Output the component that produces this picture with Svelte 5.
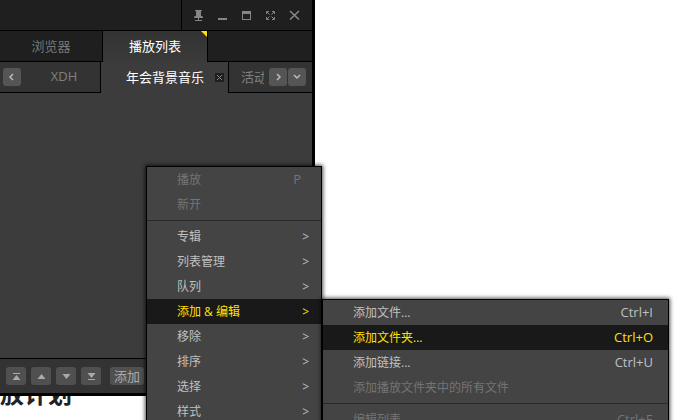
<script lang="ts">
	type Item = {
		label: string;
		key?: string;
		disabled?: boolean;
		sub?: boolean;
		active?: boolean;
		sep?: boolean;
	};

	const mainMenu: Item[] = [
		{ label: '播放', key: 'P', disabled: true },
		{ label: '新开', disabled: true },
		{ label: '专辑', sub: true, sep: true },
		{ label: '列表管理', sub: true },
		{ label: '队列', sub: true },
		{ label: '添加 & 编辑', sub: true, active: true },
		{ label: '移除', sub: true },
		{ label: '排序', sub: true },
		{ label: '选择', sub: true },
		{ label: '样式', sub: true }
	];

	const subMenu: Item[] = [
		{ label: '添加文件...', key: 'Ctrl+I' },
		{ label: '添加文件夹...', key: 'Ctrl+O', active: true },
		{ label: '添加链接...', key: 'Ctrl+U' },
		{ label: '添加播放文件夹中的所有文件', disabled: true },
		{ label: '编辑列表', key: 'Ctrl+E', disabled: true, sep: true }
	];

	const moves = [
		{ name: '移到顶部', d: 'M7 6h7v1H7zM10.500 8l4 5h-8z' },
		{ name: '上移', d: 'M10.500 7l4 5h-8z' },
		{ name: '下移', d: 'M6.500 7h8l-4 5z' },
		{ name: '移到底部', d: 'M6.500 6h8l-4 5zM7 12h7v1H7z' }
	];
</script>

{#snippet menuItems(items: Item[])}
	{#each items as item (item.label)}
		{#if item.sep}
			<div class="separator" role="separator"></div>
		{/if}
		<button
			class="menu-item"
			class:active={item.active}
			role="menuitem"
			disabled={item.disabled}
			aria-haspopup={item.sub ? 'menu' : undefined}
		>
			<span class="label">{item.label}</span>
			{#if item.key}<span class="key">{item.key}</span>{/if}
			{#if item.sub}<span class="arrow">&gt;</span>{/if}
		</button>
	{/each}
{/snippet}

<main class="desktop">
	<h1 class="page-title">放计划</h1>

	<section class="player">
		<header class="titlebar">
			<div class="controls">
				<button aria-label="置顶">
					<svg width="24" height="30">
						<path d="M8 10h7v1h-1v5h1q1 0 1 2H7q0-2 1-2h1v-5H8zM11 18h1v2h3v1H8v-1h3z" fill="#858585" />
					</svg>
				</button>
				<button aria-label="最小化">
					<svg width="24" height="30"><path d="M7 18h9v2H7z" fill="#858585" /></svg>
				</button>
				<button aria-label="最大化">
					<svg width="24" height="30">
						<path d="M7 11h9v9H7zM8 14v5h7v-5z" fill="#858585" fill-rule="evenodd" />
					</svg>
				</button>
				<button aria-label="全屏">
					<svg width="24" height="30" fill="none" stroke="#858585">
						<path d="M7.500 14v-2.500H10M13 11.500h2.500V14M15.500 17v2.500H13M10 19.500H7.500V17M8 12l2.500 2.500M15 12l-2.500 2.500M15 19l-2.500-2.500M8 19l2.500-2.500" />
					</svg>
				</button>
				<button aria-label="关闭">
					<svg width="24" height="30" fill="none" stroke="#8a8a8a" stroke-width="1.500">
						<path d="M7 11l9 8.500M16 11l-9 8.500" />
					</svg>
				</button>
			</div>
		</header>

		<nav class="tabs">
			<button class="tab">浏览器</button>
			<button class="tab current">播放列表</button>
			<div class="rest"></div>
		</nav>

		<nav class="lists">
			<div class="list first">
				<button class="square" aria-label="向左">
					<svg width="18" height="18"><path d="M10 6L7 9l3 3" /></svg>
				</button>
				<button class="name">XDH</button>
			</div>
			<div class="list current">
				<button class="name">年会背景音乐</button>
				<button class="close" aria-label="关闭列表">
					<svg width="9" height="9"><path d="M2 2l5 5M7 2L2 7" /></svg>
				</button>
			</div>
			<div class="list last">
				<button class="name">活动</button>
				<button class="square" aria-label="向右">
					<svg width="18" height="18"><path d="M8 6l3 3-3 3" /></svg>
				</button>
				<button class="square" aria-label="全部列表">
					<svg width="18" height="18"><path d="M6 7l3 3 3-3" /></svg>
				</button>
			</div>
		</nav>

		<div class="tracks"></div>

		<footer class="toolbar">
			{#each moves as move (move.name)}
				<button class="move" aria-label={move.name}>
					<svg width="20" height="18"><path d={move.d} /></svg>
				</button>
			{/each}
			<button class="add">添加</button>
		</footer>
	</section>

	<div class="menu main-menu" role="menu">
		{@render menuItems(mainMenu)}
	</div>
	<div class="menu sub-menu" role="menu">
		{@render menuItems(subMenu)}
	</div>
</main>

<style>
	:global(body) {
		margin: 0;
		background: #fff;
	}

	.desktop {
		position: relative;
		display: flex;
		flex-direction: column;
		justify-content: flex-end;
		height: 100vh;
		overflow: hidden;
		font-family: 'Open Sans', 'Noto Sans CJK SC', sans-serif;
		font-size: 13px;
	}

	button {
		margin: 0;
		padding: 0;
		border: 0;
		background: none;
		color: inherit;
		font: inherit;
		white-space: nowrap;
	}

	svg {
		display: block;
	}

	.page-title {
		margin: 0;
		padding-bottom: 12px;
		font-size: 24px;
		line-height: 28px;
		color: #222;
	}

	.player {
		position: absolute;
		top: 0;
		left: 0;
		bottom: 24px;
		box-sizing: border-box;
		width: 315px;
		display: flex;
		flex-direction: column;
		border: solid #000;
		border-width: 0 3px 3px 0;
		background: #3c3c3c;
	}

	.titlebar {
		display: flex;
		justify-content: flex-end;
		height: 30px;
		border-bottom: 1px solid #000;
		background: #1f1f1f;
	}

	.controls {
		display: flex;
		padding: 0 5px;
		border-left: 1px solid #000;
	}

	.tabs,
	.lists {
		display: flex;
		height: 31px;
	}

	.tab {
		box-sizing: border-box;
		width: 103px;
		padding-bottom: 2px;
		border-right: 1px solid #000;
		border-bottom: 1px solid #000;
		background: #1f1f1f;
		color: #777;
	}

	.tab.current {
		position: relative;
		width: 105px;
		border-bottom: 0;
		background: linear-gradient(#333, #3a3a3a);
		color: #fff;
	}

	.tab.current::after {
		content: '';
		position: absolute;
		top: 0;
		right: 0;
		border: 3px solid #ffe100;
		border-left-color: transparent;
		border-bottom-color: transparent;
	}

	.rest {
		flex: 1;
		border-bottom: 1px solid #000;
		background: #1f1f1f;
	}

	.list {
		box-sizing: border-box;
		display: flex;
		flex: none;
		align-items: center;
		border-bottom: 1px solid #000;
		background: #333;
		color: #808080;
	}

	.list .name {
		padding-bottom: 2px;
	}

	.first {
		width: 101px;
		padding: 0 3px;
		border-right: 1px solid #000;
	}

	.first .name {
		flex: 1;
		padding-left: 10px;
	}

	.list.current {
		width: 127px;
		gap: 11px;
		padding-left: 25px;
		border-bottom: 0;
		background: #3c3c3c;
		color: #fff;
	}

	.list.last {
		flex: 1;
		min-width: 0;
		gap: 1px;
		padding: 0 6px 0 12px;
		border-left: 1px solid #000;
	}

	.last .name {
		flex: 1;
		min-width: 0;
		overflow: hidden;
		margin-right: 4px;
		text-align: left;
	}

	.square {
		flex: none;
		border-radius: 3px;
		background: #555;
	}

	.square path {
		fill: none;
		stroke: #bbb;
		stroke-width: 1.5;
	}

	.close {
		background: #1f1f1f;
	}

	.close path {
		stroke: #888;
	}

	.tracks {
		flex: 1;
	}

	.toolbar {
		display: flex;
		align-items: center;
		gap: 5px;
		height: 34px;
		padding-left: 6px;
		border-top: 1px solid #000;
		background: #333;
	}

	.move {
		border-radius: 3px;
		background: #505050;
	}

	.move path {
		fill: #aaa;
	}

	.add {
		height: 18px;
		margin-left: 4px;
		padding: 0 4px;
		border-radius: 3px;
		background: #505050;
		line-height: 16px;
		color: #aaa;
	}

	.menu {
		position: absolute;
		box-sizing: border-box;
		border: 1px solid #000;
		background: #444;
		box-shadow: 0 0 4px 1px rgba(0, 0, 0, 0.7);
	}

	.main-menu {
		top: 166px;
		left: 146px;
		width: 176px;
	}

	.sub-menu {
		top: 299px;
		left: 322px;
		width: 347px;
	}

	.menu-item {
		display: flex;
		align-items: center;
		box-sizing: border-box;
		width: 100%;
		height: 25px;
		padding: 0 12px 2px 30px;
		color: #c0c0c0;
	}

	.menu-item:disabled {
		color: #747474;
	}

	.menu-item.active {
		background: #191919;
		color: #ffe100;
	}

	.label {
		flex: 1;
		font-size: 12px;
		text-align: left;
	}

	.key {
		padding-right: 3px;
	}

	.main-menu .key {
		padding-right: 8px;
	}

	.arrow {
		padding-top: 2px;
		font-size: 12px;
	}

	.separator {
		height: 1px;
		margin: 3px 0;
		background: #2a2a2a;
	}
</style>
